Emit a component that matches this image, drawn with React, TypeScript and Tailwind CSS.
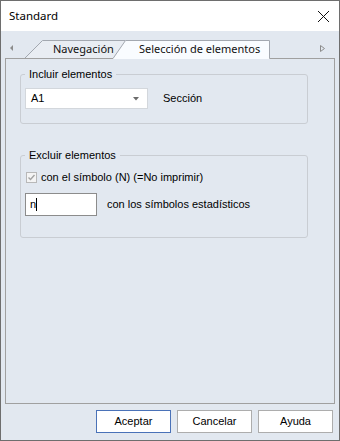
import React from 'react'

const tabLine = '#a3a8b0'

function TabStrip() {
  return (
    <div className="relative h-[28px] w-full">
      {/* tab shapes + panel top edge */}
      <svg className="absolute inset-0" width="338" height="28" viewBox="0 0 338 28">
        <polygon points="9,17 12,14 12,20" fill="#8c8c8c" />
        <polygon points="24,28 41.5,9.5 126,9.5 126,28" fill="#e9edf3" />
        <polyline points="23.5,27.5 41.5,9.5 124,9.5" fill="none" stroke={tabLine} />
        <polygon points="112,28 124.5,9.5 268.5,9.5 268.5,28" fill="#f9fcff" />
        <polyline points="112,27.5 124.5,9.5 268.5,9.5 268.5,27.5" fill="none" stroke={tabLine} />
        <line x1="4" y1="27.5" x2="112" y2="27.5" stroke="#a0a0a0" />
        <line x1="268.5" y1="27.5" x2="334" y2="27.5" stroke="#a0a0a0" />
        <polygon points="319.5,14.5 323.5,17.5 319.5,20.5" fill="none" stroke="#8c8c8c" />
      </svg>
      <div className="relative flex items-center h-full pt-[8px] font-['Noto_Sans',sans-serif] text-[11px] text-[#111]">
        <span className="ml-[52px] w-[86px]">Navegación</span>
        <span>Selección de elementos</span>
      </div>
    </div>
  )
}

function GroupBox({ title, className, children }: { title: string; className?: string; children: React.ReactNode }) {
  return (
    <fieldset className={`ml-[14px] w-[288px] border border-[#c9cdd3] rounded-[3px] px-[4px] ${className ?? ''}`}>
      <legend className="px-[4px] h-[14px] leading-[14px]">{title}</legend>
      {children}
    </fieldset>
  )
}

export default function App() {
  return (
    <div className="w-[340px] h-[441px] border border-[#6e6e6e] bg-[#e2e8f0] flex flex-col font-['Liberation_Sans',sans-serif] text-[11px] text-black">
      {/* Title bar */}
      <div className="h-[30px] bg-white flex items-center justify-between pl-[8px] pr-[9px]">
        <span className="font-['Noto_Sans',sans-serif] text-[11.5px] text-black">Standard</span>
        <svg width="13" height="13" viewBox="0 0 13 13">
          <path d="M1 1 L12 12 M12 1 L1 12" stroke="#111" strokeWidth="1" />
        </svg>
      </div>

      <TabStrip />

      {/* Tab panel */}
      <div className="ml-[4px] w-[330px] h-[345px] border border-t-0 border-[#a0a0a0] pt-[8px]">
        <GroupBox title="Incluir elementos" className="pb-[14px]">
          <div className="flex items-center mt-[7px]">
            <div className="w-[123px] h-[21px] bg-white border border-[#d3d7dc] flex items-center justify-between pl-[5px] pr-[8px]">
              <span>A1</span>
              <svg width="6" height="4" viewBox="0 0 6 4">
                <polygon points="0,0 6,0 3,3.5" fill="#6b6b6b" />
              </svg>
            </div>
            <span className="ml-[15px]">Sección</span>
          </div>
        </GroupBox>

        <GroupBox title="Excluir elementos" className="mt-[24px] pb-[21px]">
          <div className="flex items-center mt-[9px] h-[13px]">
            <div className="ml-[1px] w-[11px] h-[11px] border border-[#b8b8b8] bg-[#f4f4f4] flex items-center justify-center">
              <svg width="9" height="9" viewBox="0 0 9 9">
                <polyline points="1.5,4.5 3.5,6.5 7.5,2" fill="none" stroke="#a3a3a3" strokeWidth="1.4" />
              </svg>
            </div>
            <span className="ml-[4px]">con el símbolo (N) (=No imprimir)</span>
          </div>
          <div className="flex items-center mt-[9px]">
            <div className="w-[72px] h-[23px] bg-white border border-[#8c8c8c] flex items-center pl-[4px]">
              <span>n</span>
              <span className="w-px h-[13px] bg-black" />
            </div>
            <span className="ml-[10px]">con los símbolos estadísticos</span>
          </div>
        </GroupBox>
      </div>

      {/* Buttons */}
      <div className="flex justify-end gap-[6px] pr-[6px] pt-[6px]">
        <button className="w-[75px] h-[23px] bg-white border border-[#4a72b8] text-black">Aceptar</button>
        <button className="w-[75px] h-[23px] bg-white border border-[#adadad] text-black">Cancelar</button>
        <button className="w-[75px] h-[23px] bg-white border border-[#adadad] text-black">Ayuda</button>
      </div>
    </div>
  )
}
